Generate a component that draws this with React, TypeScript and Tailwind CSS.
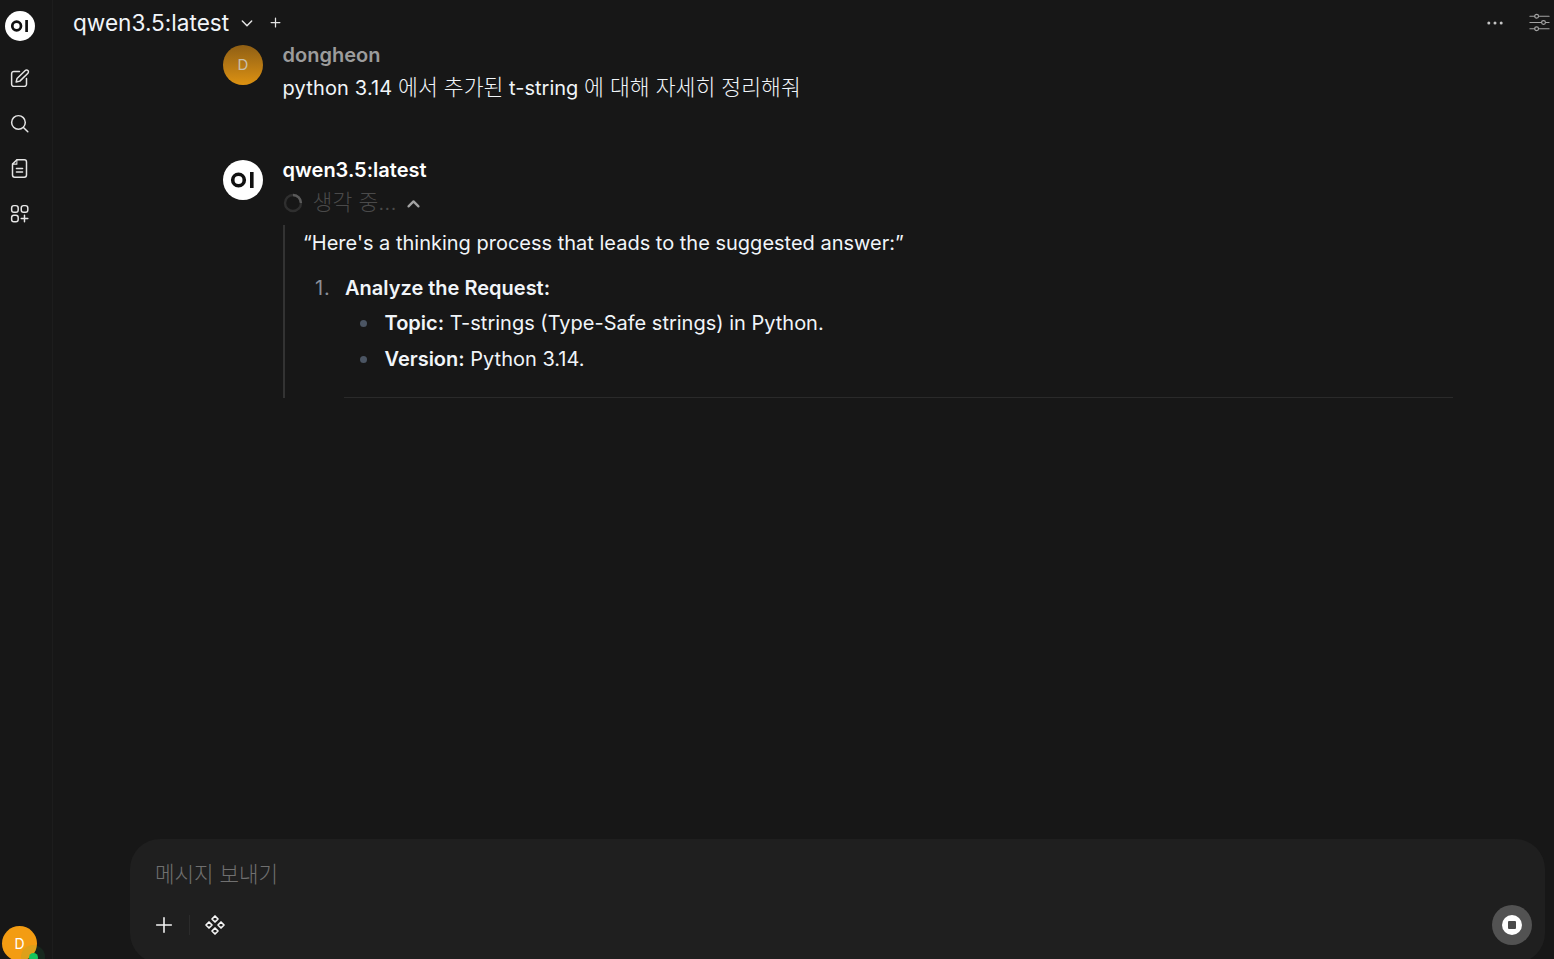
import React from "react";

const FONT = "[font-family:Inter,'Noto_Sans_CJK_KR',sans-serif]";

function OILogo({ size }: { size: number }) {
  return (
    <div className="flex items-center justify-center rounded-full bg-white shrink-0" style={{ width: size, height: size }}>
      <svg viewBox="0 0 40 40" width={size} height={size}>
        <circle cx="15.5" cy="20" r="5.8" fill="none" stroke="#111" strokeWidth="3.6" />
        <rect x="27" y="12" width="3.6" height="16" fill="#111" />
      </svg>
    </div>
  );
}

function NavIcon({ children }: { children: React.ReactNode }) {
  return (
    <div className="flex h-[45px] w-[38px] items-center justify-center">
      <svg viewBox="0 0 24 24" width="21" height="21" fill="none" stroke="#e5e5e5" strokeWidth="1.7" strokeLinecap="round" strokeLinejoin="round">
        {children}
      </svg>
    </div>
  );
}

function Ko({ children }: { children: React.ReactNode }) {
  return <span className="text-[21.6px] font-light">{children}</span>;
}

export default function App() {
  return (
    <div className={`flex h-[959px] w-[1554px] overflow-hidden bg-[#171717] text-white ${FONT}`}>
      <aside className="relative flex w-[53px] shrink-0 flex-col items-start border-r border-[#1d1d1d] pl-[5px] pt-[11px]">
        <OILogo size={30} />
        <div className="ml-[-5px] mt-[15px] flex w-full flex-col">
          <NavIcon>
            <path d="M12 4H5.5A2.5 2.5 0 0 0 3 6.5v12A2.5 2.5 0 0 0 5.5 21h12a2.5 2.5 0 0 0 2.5-2.5V12" />
            <path d="M18.6 2.9a2.1 2.1 0 0 1 3 3L12.4 15l-4.2 1 1-4.1z" />
          </NavIcon>
          <NavIcon>
            <circle cx="10.8" cy="10.8" r="7.8" />
            <path d="m21.5 21.5-5-5" />
          </NavIcon>
          <NavIcon>
            <path d="M9 2h8.5A2.5 2.5 0 0 1 20 4.5v15a2.5 2.5 0 0 1-2.5 2.5h-11A2.5 2.5 0 0 1 4 19.5V7z" />
            <path d="M9 2v5H4" strokeWidth="1.2" />
            <path d="M8.5 12h7M8.5 16h7" />
          </NavIcon>
          <NavIcon>
            <rect x="3" y="3" width="7.5" height="7.5" rx="2.6" />
            <rect x="14" y="3" width="7.5" height="7.5" rx="2.6" />
            <rect x="3" y="14" width="7.5" height="7.5" rx="2.6" />
            <path d="M17.7 14v7.5M14 17.7h7.5" />
          </NavIcon>
        </div>
        <div className="absolute left-[2px] top-[926px] flex h-[35px] w-[35px] items-center justify-center rounded-full bg-[#f39c12] text-[14px] text-white">
          D
          <span className="absolute left-[19px] top-[19px] h-[24px] w-[24px] rounded-full bg-[#22c55e]/10" />
          <span className="absolute left-[27px] top-[27px] h-[9px] w-[9px] rounded-full bg-[#16c55c]" />
        </div>
      </aside>

      <main className="flex min-w-0 flex-1 flex-col">
        <header className="flex h-[45px] shrink-0 items-center pl-[20px] pr-[3px]">
          <span className="text-[22.6px] leading-[28px] text-[#f1f5f9]">qwen3.5:latest</span>
          <svg className="ml-[10px]" viewBox="0 0 24 24" width="16" height="16" fill="none" stroke="#e5e5e5" strokeWidth="2.2" strokeLinecap="round" strokeLinejoin="round">
            <path d="m5 9 7 7 7-7" />
          </svg>
          <svg className="ml-[13px]" viewBox="0 0 24 24" width="15" height="15" fill="none" stroke="#e5e5e5" strokeWidth="2" strokeLinecap="round">
            <path d="M12 5v14M5 12h14" />
          </svg>
          <div className="ml-auto flex items-center gap-[21px]">
            <svg viewBox="0 0 24 24" width="24" height="24" fill="#c4c4c4">
              <circle cx="5.8" cy="12" r="1.5" />
              <circle cx="12" cy="12" r="1.5" />
              <circle cx="18.2" cy="12" r="1.5" />
            </svg>
            <svg viewBox="0 0 24 24" width="23" height="23" fill="none" stroke="#a3a3a3" strokeWidth="1.2" strokeLinecap="round">
              <path d="M2 5.5h5M11 5.5h11M2 12h12M18.5 12H22M2 18.5h5M11 18.5h11" />
              <circle cx="9" cy="5.5" r="2" />
              <circle cx="16.2" cy="12" r="2" />
              <circle cx="9" cy="18.5" r="2" />
            </svg>
          </div>
        </header>

        <section className="min-h-0 flex-1 pl-[170px] pr-[101px]">
          <div className="flex gap-[19.6px]">
            <div className="flex h-[40px] w-[40px] shrink-0 items-center justify-center rounded-full bg-gradient-to-b from-[#8f5f14] to-[#dd9211] text-[15px] text-[#c9c0ad]">
              D
            </div>
            <div className="-mt-[1px] flex flex-col">
              <div className="text-[20px] font-semibold leading-[22px] text-[#9c9c9c]">dongheon</div>
              <div className="mt-[7px] text-[20px] leading-[28px] text-[#f1f5f9]">
                <span className="tracking-[0.15px]">python 3.14</span> <Ko>에서 추가된</Ko> t-string <Ko>에 대해 자세히 정리해줘</Ko>
              </div>
            </div>
          </div>

          <div className="mt-[58px] flex gap-[19.6px]">
            <OILogo size={40} />
            <div className="-mt-[1px] flex min-w-0 flex-1 flex-col">
              <div className="text-[20px] font-semibold leading-[22px] text-white">qwen3.5:latest</div>
              <div className="mt-[8px] flex h-[28px] items-center">
                <svg viewBox="0 0 20 20" width="20" height="20" fill="none" strokeWidth="2.4">
                  <circle cx="10" cy="10" r="8" stroke="#2f2f2f" />
                  <path d="M10 2a8 8 0 0 1 8 8" stroke="#5a5a5a" />
                </svg>
                <span className="-mt-[2px] ml-[10px] text-[20px] text-[#4a4a4a]"><Ko>생각 중...</Ko></span>
                <svg className="ml-[8px]" viewBox="0 0 24 24" width="17" height="17" fill="none" stroke="#a3a3a3" strokeWidth="3.2" strokeLinecap="round" strokeLinejoin="round">
                  <path d="m5 16 7-7 7 7" />
                </svg>
              </div>
              <div className="mt-[8px] border-l-2 border-[#333333] pl-[18.4px] text-[20px] text-[#f1f5f9]">
                <p className="pt-[4px] leading-[28px]">“Here's a thinking process that leads to the suggested answer:”</p>
                <div className="mt-[17px] flex leading-[28px]">
                  <span className="ml-[12px] w-[30px] shrink-0 tracking-[1px] text-[#8a8f98]">1.</span>
                  <div className="min-w-0 flex-1">
                    <p className="font-semibold">Analyze the Request:</p>
                    <ul className="mt-[7px] flex flex-col gap-[8px]">
                      <li className="flex items-center">
                        <span className="ml-[15px] mr-[17.5px] h-[7px] w-[7px] shrink-0 rounded-full bg-[#4b5563]" />
                        <span><b className="font-semibold">Topic:</b> T-strings (Type-Safe strings) in Python.</span>
                      </li>
                      <li className="flex items-center">
                        <span className="ml-[15px] mr-[17.5px] h-[7px] w-[7px] shrink-0 rounded-full bg-[#4b5563]" />
                        <span><b className="font-semibold">Version:</b> Python 3.14.</span>
                      </li>
                    </ul>
                    <div className="-ml-[1px] mt-[24px] h-px bg-[#2a2a2a]" />
                  </div>
                </div>
              </div>
            </div>
          </div>
        </section>

        <div className="-mb-[4px] ml-[77px] mr-[9px] h-[124px] shrink-0 rounded-[30px] bg-[#1f1f1f] px-[25px] pt-[21px]">
          <div className="text-[21.2px] font-light leading-[28px] text-[#707070]">메시지 보내기</div>
          <div className="mt-[17px] flex h-[40px] items-center">
            <svg className="ml-[-2px]" viewBox="0 0 24 24" width="22" height="22" fill="none" stroke="#f5f5f5" strokeWidth="1.7" strokeLinecap="round">
              <path d="M12 4v16M4 12h16" />
            </svg>
            <div className="ml-[14px] h-[20px] w-px bg-[#2b2b2b]" />
            <svg className="ml-[13px]" viewBox="0 0 24 24" width="24" height="24" fill="none" stroke="#f5f5f5" strokeWidth="1.7" strokeLinejoin="round">
              <path d="m12 3 3 3-3 3-3-3zM6 9l3 3-3 3-3-3zM18 9l3 3-3 3-3-3zM12 15l3 3-3 3-3-3z" />
            </svg>
            <div className="ml-auto mr-[-12px] flex h-[40px] w-[40px] items-center justify-center rounded-full bg-[#525252]">
              <div className="flex h-[20px] w-[20px] items-center justify-center rounded-full bg-white">
                <div className="h-[8px] w-[8px] rounded-[1px] bg-[#4a4a4a]" />
              </div>
            </div>
          </div>
        </div>
      </main>
    </div>
  );
}
